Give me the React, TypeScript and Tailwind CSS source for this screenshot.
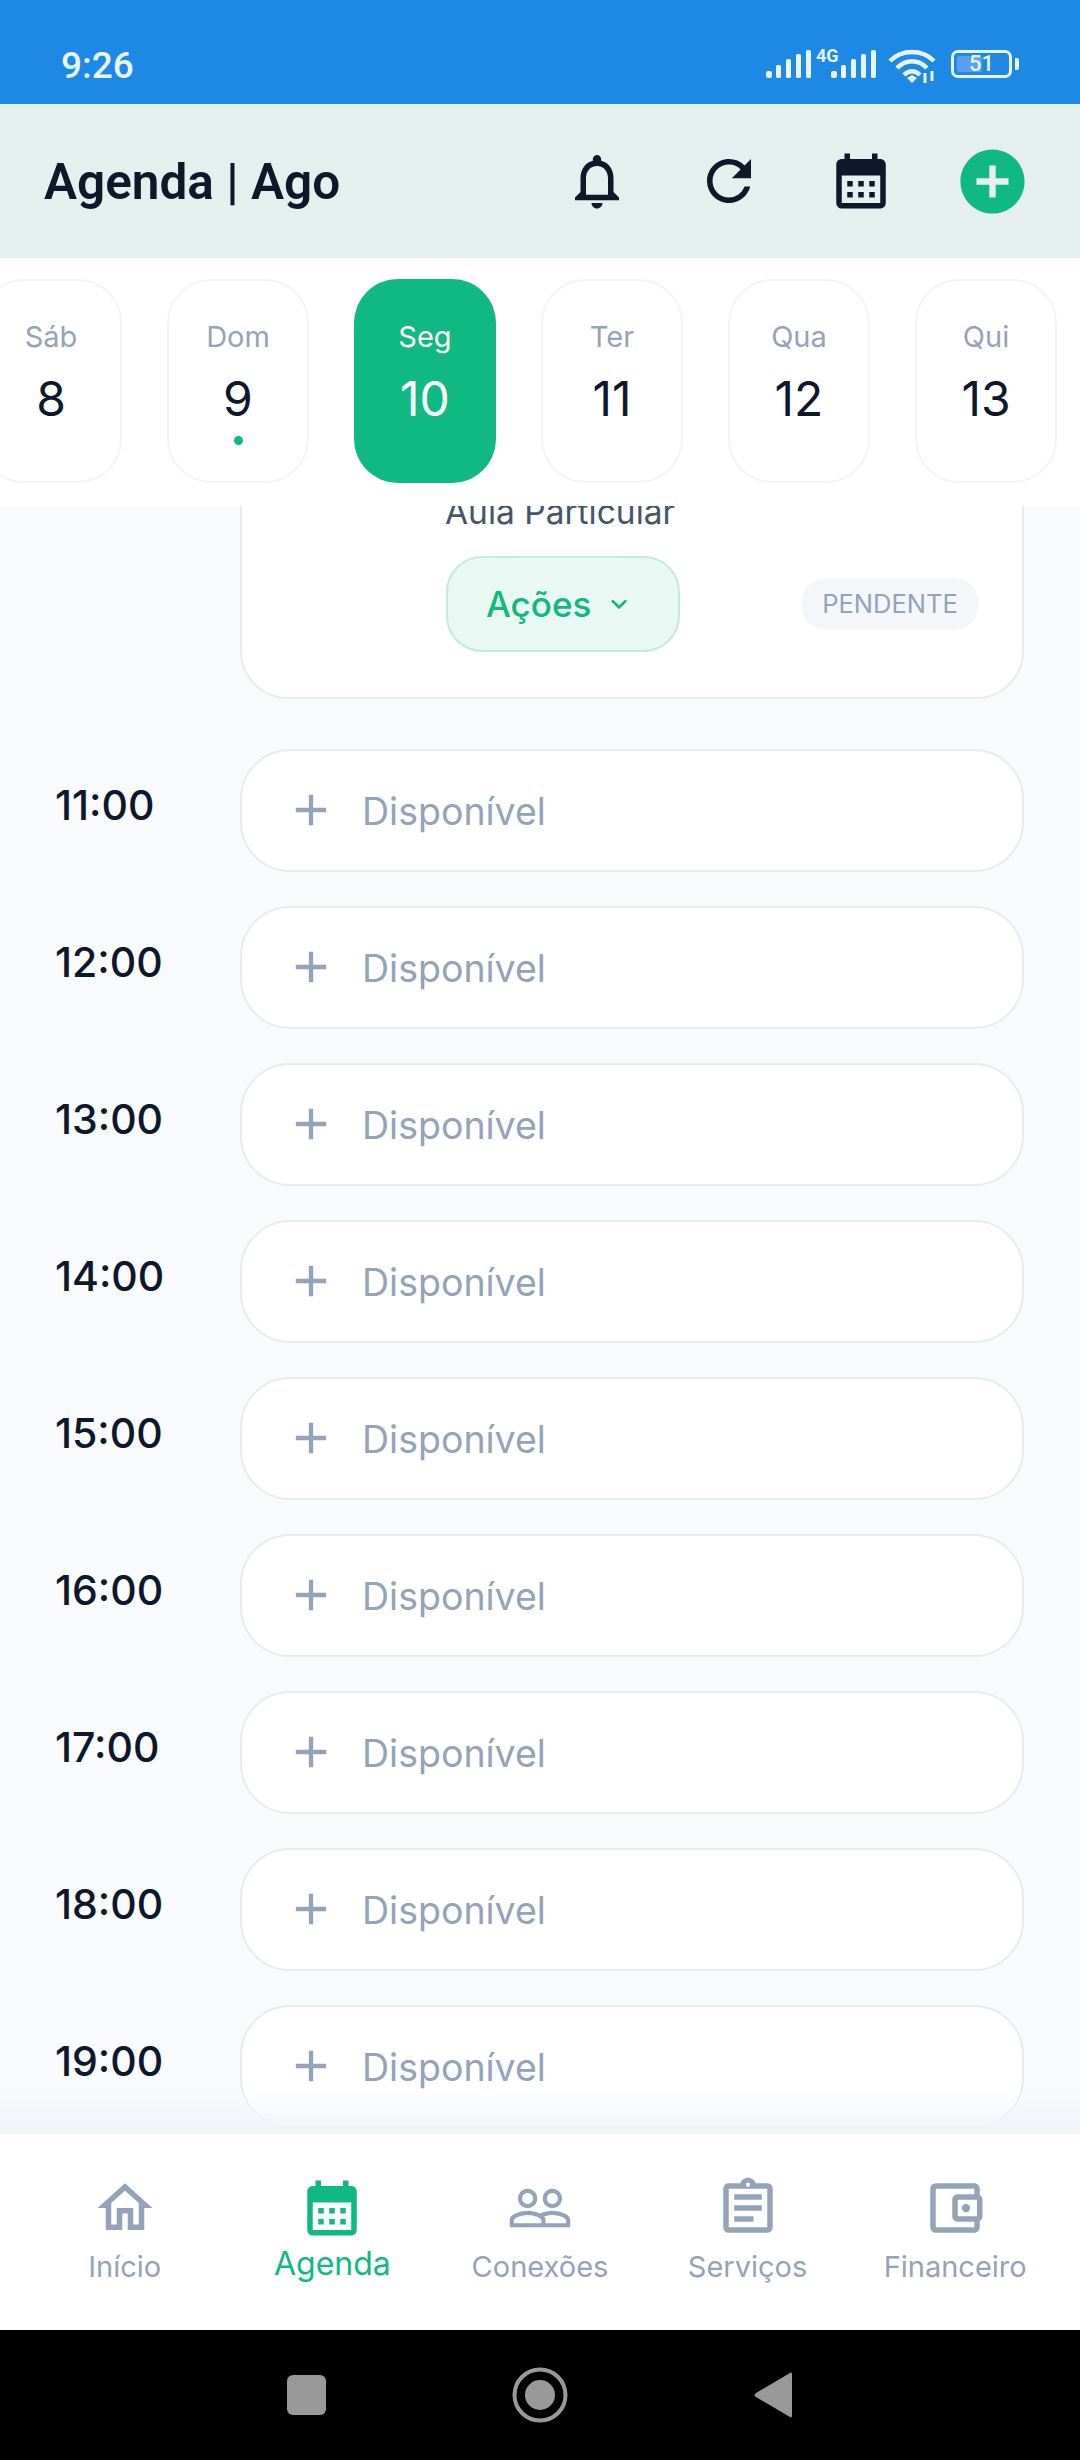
import {
  MdAdd,
  MdAddCircle,
  MdCalendarMonth,
  MdKeyboardArrowDown,
  MdNotificationsNone,
  MdOutlineAccountBalanceWallet,
  MdOutlineAssignment,
  MdOutlineHome,
  MdPeopleOutline,
  MdRefresh,
} from 'react-icons/md';

const days = [
  { label: 'Sáb', day: '8' },
  { label: 'Dom', day: '9', dot: true },
  { label: 'Seg', day: '10', active: true },
  { label: 'Ter', day: '11' },
  { label: 'Qua', day: '12' },
  { label: 'Qui', day: '13' },
];

const hours = ['11:00', '12:00', '13:00', '14:00', '15:00', '16:00', '17:00', '18:00', '19:00'];

const tabs = [
  { label: 'Início', Icon: MdOutlineHome },
  { label: 'Agenda', Icon: MdCalendarMonth, active: true },
  { label: 'Conexões', Icon: MdPeopleOutline },
  { label: 'Serviços', Icon: MdOutlineAssignment },
  { label: 'Financeiro', Icon: MdOutlineAccountBalanceWallet },
];

const Signal = () => (
  <svg width="45" height="28" viewBox="0 0 45 28" fill="#e6f4ff">
    <rect x="0" y="21" width="6" height="7" rx="2" />
    <rect x="10" y="15" width="5" height="13" rx="1.5" />
    <rect x="20" y="9" width="5" height="19" rx="1.5" />
    <rect x="30" y="4" width="5" height="24" rx="1.5" />
    <rect x="40" y="0" width="5" height="28" rx="1.5" />
  </svg>
);

const Wifi = () => (
  <svg width="50" height="36" viewBox="0 0 50 36" fill="none" stroke="#e6f4ff" strokeWidth="4.5">
    <path d="M2 13C14 1 34 1 46 13" />
    <path d="M9 20C18 11 30 11 39 20" />
    <path d="M16 27C21 22 27 22 32 27" />
    <path d="M19 30L24 35L29 30L24 27Z" fill="#e6f4ff" stroke="none" />
    <path d="M37 25V35M44 23V33" strokeWidth="3" />
  </svg>
);

const StatusBar = () => (
  <div className="h-[104px] bg-[#1e88e5] flex items-start justify-between pl-[61px] pr-[61px] pt-[48px] text-[#e6f4ff] font-['Roboto',sans-serif]">
    <span className="text-[37px] leading-[36px] font-medium">9:26</span>
    <div className="flex items-start mt-[2px]">
      <Signal />
      <span className="text-[18px] leading-[18px] font-bold w-[20px] -mt-[3px] ml-[5px] -mr-[5px]">4G</span>
      <Signal />
      <div className="ml-[12px] -mt-[2px]">
        <Wifi />
      </div>
      <div className="ml-[13px] w-[61px] h-[28px] border-[3px] border-[#e6f4ff] rounded-[7px] relative flex items-center justify-center">
        <div className="absolute left-[3px] top-[3px] bottom-[3px] w-[25px] bg-[#5b9ff0] rounded-[2px]" />
        <span className="relative text-[22px] leading-[22px] font-medium">51</span>
      </div>
      <div className="ml-[3px] mt-[8px] w-[4px] h-[12px] bg-[#e6f4ff] rounded-r-[2px]" />
    </div>
  </div>
);

const Header = () => (
  <div className="h-[154px] bg-[#e5efee] flex items-center pl-[44px] pr-[55px] text-[#0f172a]">
    <h1 className="flex-1 text-[49.5px] leading-[56px] font-semibold font-['Roboto',sans-serif] mt-[1px]">Agenda | Ago</h1>
    <div className="flex items-center">
      <MdNotificationsNone size={66} className="mr-[66px]" />
      <MdRefresh size={66} className="mr-[66px]" />
      <MdCalendarMonth size={66} className="mr-[60px]" />
      <MdAddCircle size={77} className="text-[#10b981] -mr-[6px]" />
    </div>
  </div>
);

const DayStrip = () => (
  <div className="h-[248px] bg-white overflow-hidden flex items-center relative z-10">
    <div className="flex items-center gap-[45px] -ml-[20px] -mt-[2px] shrink-0">
      {days.map((d) => (
        <div
          key={d.label}
          className={
            d.active
              ? 'w-[142px] h-[204px] rounded-[44px] bg-[#10b981] text-white flex flex-col items-center pt-[41px] shrink-0'
              : 'w-[142px] h-[204px] rounded-[44px] bg-white border-2 border-[#f1f5f9] text-[#0f172a] flex flex-col items-center pt-[39px] shrink-0'
          }
        >
          <span className={d.active ? 'text-[29px] leading-[34px]' : 'text-[29px] leading-[34px] text-[#94a3b8]'}>
            {d.label}
          </span>
          <span className="text-[48px] leading-[56px] mt-[17px]">{d.day}</span>
          {d.dot && <span className="w-[9px] h-[9px] rounded-full bg-[#10b981] mt-[9px]" />}
        </div>
      ))}
    </div>
  </div>
);

const Schedule = () => (
  <div className="flex-1 bg-[#f8fafc] overflow-hidden relative">
    <div className="ml-[240px] w-[784px] h-[253px] -mt-[60px] bg-white border-2 border-[#e8ecf1] rounded-[48px] pt-[44px]">
      <p className="pl-[203px] text-[33.5px] leading-[40px] text-[#475569]">Aula Particular</p>
      <div className="mt-[24px] pl-[204px] pr-[43px] flex items-center justify-between">
        <button className="w-[234px] h-[96px] rounded-[36px] bg-[#e9f8f3] border-2 border-[#c3ebdd] text-[#10b981] text-[35px] font-medium flex items-center pl-[38px]">
          Ações
          <MdKeyboardArrowDown size={32} className="ml-[12px]" />
        </button>
        <span className="w-[178px] h-[52px] rounded-[26px] bg-[#f4f6f9] text-[#94a3b8] text-[25.5px] flex items-center justify-center">
          PENDENTE
        </span>
      </div>
    </div>
    <div className="mt-[50px] flex flex-col gap-[34px]">
      {hours.map((hour) => (
        <div key={hour} className="flex">
          <span className="w-[240px] pl-[55px] pt-[32px] text-[41px] leading-[48px] font-medium text-[#0f172a]">{hour}</span>
          <div className="w-[784px] h-[123px] bg-white border-2 border-[#e8ecf1] rounded-[50px] flex items-center pl-[43px] text-[#94a3b8]">
            <MdAdd size={52} className="-mt-[2px]" />
            <span className="ml-[25px] text-[37.5px] leading-[44px] mt-[3px]">Disponível</span>
          </div>
        </div>
      ))}
    </div>
    <div className="absolute left-0 right-0 bottom-0 h-[48px] bg-gradient-to-b from-transparent to-[#f1f5f9]" />
  </div>
);

const BottomTabs = () => (
  <div className="h-[196px] bg-white grid grid-cols-5 px-[21px] pt-[41px]">
    {tabs.map(({ label, Icon, active }) => (
      <div key={label} className={active ? 'flex flex-col items-center text-[#10b981]' : 'flex flex-col items-center text-[#94a3b8]'}>
        <Icon size={66} />
        <span className={active ? 'text-[32px] leading-[36px] mt-[5px]' : 'text-[29px] leading-[36px] mt-[8px]'}>{label}</span>
      </div>
    ))}
  </div>
);

const SystemNav = () => (
  <div className="h-[130px] bg-black flex items-center justify-center gap-[186px] pr-[2px]">
    <div className="w-[39px] h-[40px] bg-[#999999] rounded-[6px]" />
    <svg width="56" height="56" viewBox="0 0 56 56">
      <circle cx="28" cy="28" r="25.5" fill="none" stroke="#999999" strokeWidth="4" />
      <circle cx="28" cy="28" r="15" fill="#999999" />
    </svg>
    <svg width="38" height="48" viewBox="0 0 38 48">
      <path d="M36 2C37 1 38 2 38 3V45C38 46 37 47 36 46L2 26C0 25 0 23 2 22Z" fill="#999999" />
    </svg>
  </div>
);

export default function App() {
  return (
    <div className="w-[1080px] h-[2460px] flex flex-col overflow-hidden font-['Inter',sans-serif]">
      <StatusBar />
      <Header />
      <DayStrip />
      <Schedule />
      <BottomTabs />
      <SystemNav />
    </div>
  );
}
